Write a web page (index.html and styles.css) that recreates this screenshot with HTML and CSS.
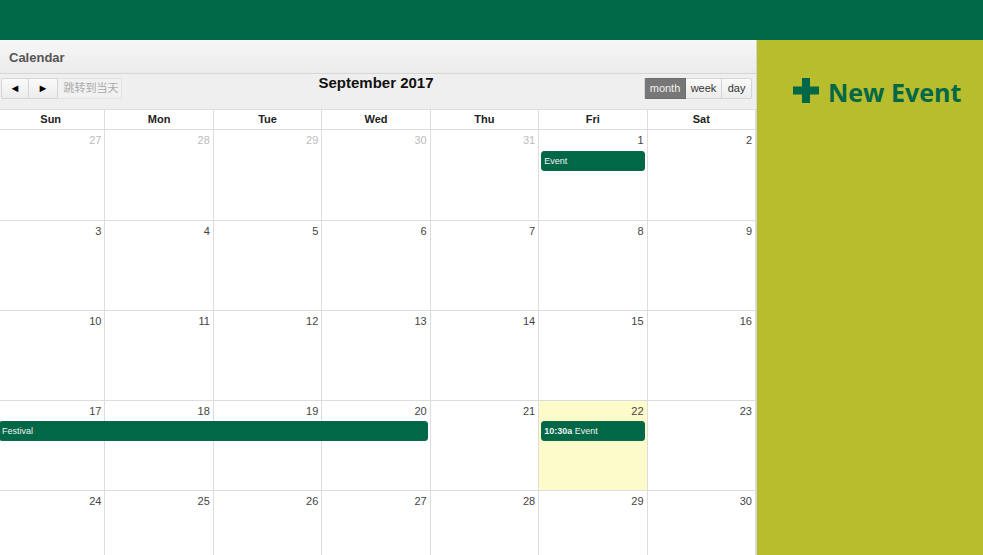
FILE: index.html
```html
<!DOCTYPE html>
<html>
<head>
<meta charset="utf-8">
<link rel="stylesheet" href="styles.css">
</head>
<body>
<div class="topbar"></div>
<div class="main">
  <section class="panel">
    <div class="panel-head">Calendar</div>
    <div class="toolbar">
      <div class="tb-left">
        <div class="btn-group">
          <button class="btn arrow">&#9668;</button>
          <button class="btn arrow">&#9658;</button>
          <button class="btn today">跳转到当天</button>
        </div>
      </div>
      <h2 class="title">September 2017</h2>
      <div class="tb-right">
        <div class="btn-group">
          <button class="btn active">month</button>
          <button class="btn">week</button>
          <button class="btn">day</button>
        </div>
      </div>
    </div>
    <div class="cal">
      <div class="dow">
        <div>Sun</div><div>Mon</div><div>Tue</div><div>Wed</div><div>Thu</div><div>Fri</div><div>Sat</div>
      </div>
      <div class="week first">
        <div class="day c1 other">27</div><div class="day c2 other">28</div><div class="day c3 other">29</div><div class="day c4 other">30</div><div class="day c5 other">31</div><div class="day c6">1</div><div class="day c7">2</div>
        <div class="ev s6 e7">Event</div>
      </div>
      <div class="week">
        <div class="day c1">3</div><div class="day c2">4</div><div class="day c3">5</div><div class="day c4">6</div><div class="day c5">7</div><div class="day c6">8</div><div class="day c7">9</div>
      </div>
      <div class="week">
        <div class="day c1">10</div><div class="day c2">11</div><div class="day c3">12</div><div class="day c4">13</div><div class="day c5">14</div><div class="day c6">15</div><div class="day c7">16</div>
      </div>
      <div class="week">
        <div class="day c1">17</div><div class="day c2">18</div><div class="day c3">19</div><div class="day c4">20</div><div class="day c5">21</div><div class="day c6 today-cell">22</div><div class="day c7">23</div>
        <div class="ev s1 e5">Festival</div>
        <div class="ev s6 e7"><b>10:30a</b> Event</div>
      </div>
      <div class="week">
        <div class="day c1">24</div><div class="day c2">25</div><div class="day c3">26</div><div class="day c4">27</div><div class="day c5">28</div><div class="day c6">29</div><div class="day c7">30</div>
      </div>
    </div>
  </section>
  <aside class="side">
    <div class="new-event">
      <svg class="plus" width="26" height="25" viewBox="0 0 26 25"><path d="M9 0h8v8.5h9v8h-9v8.5h-8v-8.5h-9v-8h9z" fill="#006747"/></svg>
      <span>New Event</span>
    </div>
  </aside>
</div>
</body>
</html>
```

FILE: styles.css
```css
* { box-sizing: border-box; }
html, body { margin: 0; padding: 0; }
body {
  width: 983px;
  height: 555px;
  overflow: hidden;
  font-family: "Liberation Sans", Arial, "Noto Sans CJK SC", sans-serif;
  background: #fff;
}
.topbar {
  height: 40px;
  background: #006747;
}
.main {
  display: flex;
  height: 515px;
}
.panel {
  width: 757px;
  flex: none;
  overflow: hidden;
  border-right: 1px solid #d4d4d4;
  background: #fff;
}
.panel-head {
  height: 34px;
  padding: 10px 9px 0;
  font-size: 13px;
  font-weight: bold;
  color: #555;
  background: linear-gradient(#f7f7f7, #ebebeb);
  border-bottom: 1px solid #d6d6d6;
}
.toolbar {
  height: 35px;
  background: #efefef;
  display: flex;
  align-items: flex-start;
  padding: 4px 4px 0 1px;
}
.tb-left, .tb-right { flex: 1; display: flex; }
.tb-right { justify-content: flex-end; }
.title {
  margin: -4px 0 0;
  font-size: 15px;
  font-weight: bold;
  color: #111;
  line-height: 18px;
  padding-right: 1px;
}
.btn-group { display: flex; }
.btn {
  height: 21px;
  margin: 0;
  padding: 0 6px;
  font-family: "Liberation Sans", Arial, "Noto Sans CJK SC", sans-serif;
  font-size: 11px;
  color: #333;
  background: linear-gradient(#fafafa, #ececec);
  border: 1px solid #d5d5d5;
  border-left: none;
  border-radius: 0;
  line-height: 19px;
}
.btn-group .btn:first-child { border-left: 1px solid #d5d5d5; border-radius: 2px 0 0 2px; }
.btn-group .btn:last-child { border-radius: 0 2px 2px 0; }
.btn.arrow { width: 28px; font-size: 11px; color: #000; padding: 0; }
.btn.arrow + .btn.arrow { width: 29px; }
.btn.today {
  color: #aaa;
  background: #f1f1f1;
  border-color: #e3e3e3;
  width: 64px;
  padding: 0 0 0 3px;
}
.btn.active {
  background: #777;
  color: #f0f0f0;
  border-color: #6c6c6c;
  width: 42px;
  padding: 0;
}
.tb-right .btn:nth-child(2) { width: 36px; padding: 0; }
.tb-right .btn:nth-child(3) { width: 30px; padding: 0; }

.cal {
  margin-left: -3px;
  width: 759px;
}
.dow {
  display: grid;
  grid-template-columns: repeat(7, 1fr);
  height: 21px;
  border-top: 1px solid #ddd;
  border-bottom: 1px solid #ddd;
}
.dow div {
  text-align: center;
  font-size: 11px;
  font-weight: bold;
  color: #222;
  line-height: 19px;
  border-right: 1px solid #ddd;
}
.week {
  display: grid;
  grid-template-columns: repeat(7, 1fr);
  grid-template-rows: 20px 20px 1fr;
  height: 90px;
  border-bottom: 1px solid #ddd;
}
.week.first { height: 91px; grid-template-rows: 21px 20px 1fr; }
.day {
  grid-row: 1 / -1;
  border-right: 1px solid #ddd;
  text-align: right;
  font-size: 11px;
  color: #444;
  padding: 4px 3px 0 0;
  line-height: 13px;
}
.day.other { color: #bbb; }
.day.today-cell { background: #fdfbca; }
.c1 { grid-column: 1; } .c2 { grid-column: 2; } .c3 { grid-column: 3; } .c4 { grid-column: 4; }
.c5 { grid-column: 5; } .c6 { grid-column: 6; } .c7 { grid-column: 7; }
.ev {
  grid-row: 2;
  margin: 0 3px 0 2px;
  background: #006747;
  border: 1px solid #0a6b4b;
  border-radius: 3px;
  color: #f2f2f2;
  font-size: 9px;
  line-height: 18px;
  padding-left: 2px;
  white-space: nowrap;
  overflow: hidden;
}
.ev b { font-weight: bold; }
.s1 { grid-column-start: 1; } .s6 { grid-column-start: 6; }
.e5 { grid-column-end: 5; } .e7 { grid-column-end: 7; }

.side {
  flex: 1;
  background: #b7bd2c;
}
.new-event {
  display: flex;
  align-items: center;
  padding: 36px 0 0 36px;
  color: #006747;
  font-family: "Open Sans", sans-serif;
  font-weight: 700;
  font-size: 25px;
  line-height: 32px;
}
.plus { margin-right: 9px; margin-top: -4px; }
```
